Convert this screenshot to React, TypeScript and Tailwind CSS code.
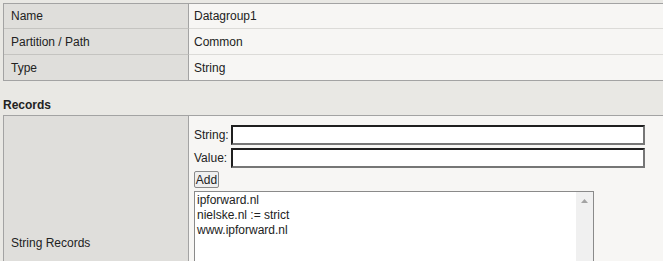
import React from 'react';

const rows = [
  { label: 'Name', value: 'Datagroup1' },
  { label: 'Partition / Path', value: 'Common' },
  { label: 'Type', value: 'String' },
];

const records = ['ipforward.nl', 'nielske.nl := strict', 'www.ipforward.nl'];

function TextInput() {
  return (
    <div className="h-[20px] w-[414px] bg-white border-2 border-t-[#1f1f1f] border-l-[#1f1f1f] border-b-[#767676] border-r-[#767676]" />
  );
}

export default function App() {
  return (
    <div
      className="min-h-screen bg-[#e9e8e4] pt-[3px] text-[12px] text-[#222]"
      style={{ fontFamily: '"Liberation Sans", Arial, sans-serif' }}
    >
      {/* General properties */}
      <div className="ml-[3px] border-t border-l border-b border-[#a3a3a3]">
        {rows.map((row, i) => (
          <div key={row.label} className={`flex ${i === 0 ? 'h-[24px]' : 'h-[26px]'}`}>
            <div
              className={`w-[185px] shrink-0 flex items-center pl-[7px] bg-[#dfdedb] border-r border-[#a3a3a3] ${
                i > 0 ? 'border-t border-t-[#c4c3c0]' : ''
              }`}
            >
              {row.label}
            </div>
            <div
              className={`flex-1 flex items-center pl-[5px] bg-[#f7f6f4] ${
                i > 0 ? 'border-t border-t-[#dcdbd8]' : ''
              }`}
            >
              {row.value}
            </div>
          </div>
        ))}
      </div>

      {/* Records header */}
      <div className="h-[34px] flex items-end pb-[1px] pl-[3px] font-bold">Records</div>

      {/* Records table */}
      <div className="ml-[3px] border-t border-l border-[#a3a3a3] flex">
        <div className="w-[185px] shrink-0 flex items-center pl-[7px] bg-[#dfdedb] border-r border-[#a3a3a3]">
          String Records
        </div>
        <div className="flex-1 bg-[#f7f6f4] pl-[5px] pt-[9px] pb-[8px]">
          <div className="flex items-center gap-[1px]">
            <span className="w-[36px]">String:</span>
            <TextInput />
          </div>
          <div className="flex items-center gap-[1px] mt-[3px]">
            <span className="w-[36px]">Value:</span>
            <TextInput />
          </div>
          <button className="mt-[3px] h-[17px] w-[25px] flex items-center justify-center border border-[#8a8a8a] rounded-[2px] bg-[#efefef] leading-none">
            Add
          </button>
          <div className="mt-[3px] w-[400px] h-[171px] bg-white border border-[#8a8a8a] flex">
            <div className="flex-1 pl-[2px] pt-[1px]">
              {records.map((r) => (
                <div key={r} className="h-[15px] leading-[15px]">
                  {r}
                </div>
              ))}
            </div>
            <div className="w-[17px] bg-[#f0f0f0] flex justify-center pt-[7px]">
              <svg width="7" height="4" viewBox="0 0 7 4">
                <polygon points="3.5,0 7,4 0,4" fill="#a3a3a3" />
              </svg>
            </div>
          </div>
        </div>
      </div>
    </div>
  );
}
